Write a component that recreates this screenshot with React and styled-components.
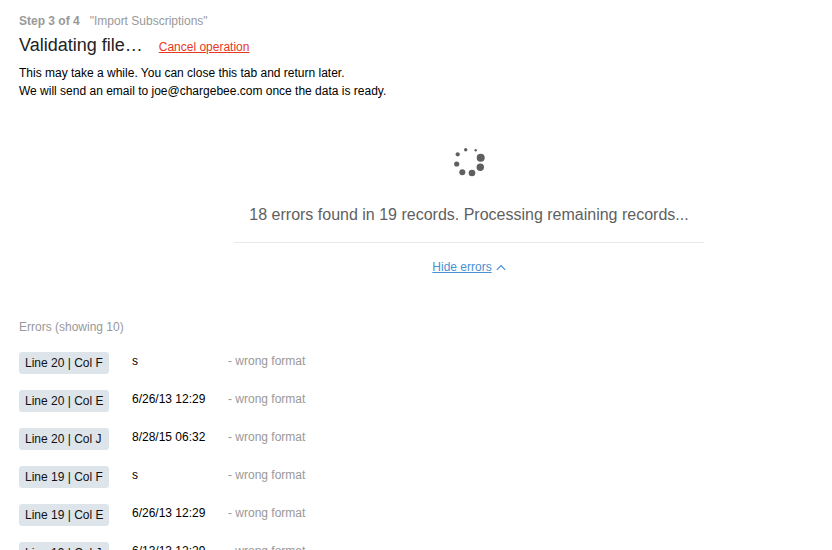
import React from "react";
import styled, { createGlobalStyle } from "styled-components";

const GlobalStyle = createGlobalStyle`
  html, body {
    margin: 0;
    padding: 0;
    background: #fff;
    height: 550px;
    overflow: hidden;
  }
  body {
    font-family: "Liberation Sans", Arial, sans-serif;
    color: #000;
  }
`;

const errors = [
  { line: 20, col: "F", value: "s" },
  { line: 20, col: "E", value: "6/26/13 12:29" },
  { line: 20, col: "J", value: "8/28/15 06:32" },
  { line: 19, col: "F", value: "s" },
  { line: 19, col: "E", value: "6/26/13 12:29" },
  { line: 19, col: "J", value: "6/13/13 12:29" },
];

const dots = [
  { x: 24.7, y: 5.3, r: 1.2 },
  { x: 14.7, y: 4.7, r: 1.7 },
  { x: 6.7, y: 9.3, r: 2.1 },
  { x: 5.7, y: 19, r: 2.6 },
  { x: 11.3, y: 27.3, r: 3 },
  { x: 21, y: 28, r: 3.3 },
  { x: 29.3, y: 22.3, r: 3.7 },
  { x: 29.7, y: 12.7, r: 4 },
];

const Spinner = () => (
  <SpinnerSvg width="36" height="36" viewBox="0 0 36 36">
    {dots.map((d, i) => (
      <circle key={i} cx={d.x} cy={d.y} r={d.r} fill="#5f5f5f" />
    ))}
  </SpinnerSvg>
);

const ChevronUp = () => (
  <svg width="10" height="7" viewBox="0 0 10 7" fill="none">
    <path d="M0.8 5.8 L5 1.5 L9.2 5.8" stroke="#4a90d2" strokeWidth="1.2" />
  </svg>
);

export default function App() {
  return (
    <Page>
      <GlobalStyle />
      <StepLine>
        <StepCount>Step 3 of 4</StepCount>
        <span>"Import Subscriptions"</span>
      </StepLine>
      <TitleRow>
        <Title>Validating file…</Title>
        <CancelLink href="#">Cancel operation</CancelLink>
      </TitleRow>
      <Intro>
        This may take a while. You can close this tab and return later.
        <br />
        We will send an email to joe@chargebee.com once the data is ready.
      </Intro>

      <Progress>
        <Spinner />
        <Status>18 errors found in 19 records. Processing remaining records...</Status>
        <Toggle>
          <HideLink href="#">Hide errors</HideLink>
          <ChevronUp />
        </Toggle>
      </Progress>

      <ErrorsHeading>Errors (showing 10)</ErrorsHeading>
      <ErrorList>
        {errors.map((e, i) => (
          <ErrorRow key={i}>
            <Tag>Line {e.line} | Col {e.col}</Tag>
            <Value>{e.value}</Value>
            <Message>- wrong format</Message>
          </ErrorRow>
        ))}
      </ErrorList>
    </Page>
  );
}

const Page = styled.div`
  height: 550px;
  overflow: hidden;
  padding: 14px 0 0 19px;
  box-sizing: border-box;
`;

const StepLine = styled.div`
  display: flex;
  gap: 10px;
  font-size: 12px;
  line-height: 14px;
  color: #999;
`;

const StepCount = styled.b`
  font-weight: 700;
`;

const TitleRow = styled.div`
  display: flex;
  align-items: baseline;
  gap: 16px;
  margin-top: 3px;
`;

const Title = styled.h1`
  margin: 0;
  font-size: 18px;
  line-height: 28px;
  font-weight: 400;
  color: #222;
`;

const CancelLink = styled.a`
  font-size: 12px;
  color: #e8371f;
  text-decoration: underline;
`;

const Intro = styled.p`
  margin: 5px 0 0;
  font-size: 12px;
  line-height: 18px;
`;

const Progress = styled.div`
  width: 470px;
  margin: 45px 0 0 215px;
  display: flex;
  flex-direction: column;
  align-items: center;
`;

const SpinnerSvg = styled.svg`
  display: block;
`;

const Status = styled.div`
  width: 100%;
  padding: 23px 0 16px;
  border-bottom: 1px solid #e8e8e8;
  text-align: center;
  font-size: 16px;
  line-height: 22px;
  color: #5f5f5f;
`;

const Toggle = styled.div`
  display: flex;
  align-items: center;
  gap: 4px;
  margin-top: 16px;
`;

const HideLink = styled.a`
  font-size: 12px;
  line-height: 16px;
  color: #4a90d2;
  text-decoration: underline;
`;

const ErrorsHeading = styled.div`
  margin-top: 45px;
  font-size: 12px;
  line-height: 14px;
  color: #999;
`;

const ErrorList = styled.div`
  margin-top: 18px;
  display: flex;
  flex-direction: column;
  gap: 16px;
`;

const ErrorRow = styled.div`
  display: flex;
  align-items: flex-start;
  height: 22px;
  font-size: 12px;
`;

const Tag = styled.div`
  width: 90px;
  height: 22px;
  box-sizing: border-box;
  padding-left: 6px;
  line-height: 22px;
  background: #dde4ea;
  border-radius: 3px;
  white-space: nowrap;
  color: #111;
`;

const Value = styled.div`
  margin-left: 23px;
  width: 96px;
  line-height: 18px;
`;

const Message = styled.div`
  line-height: 18px;
  color: #999;
`;
